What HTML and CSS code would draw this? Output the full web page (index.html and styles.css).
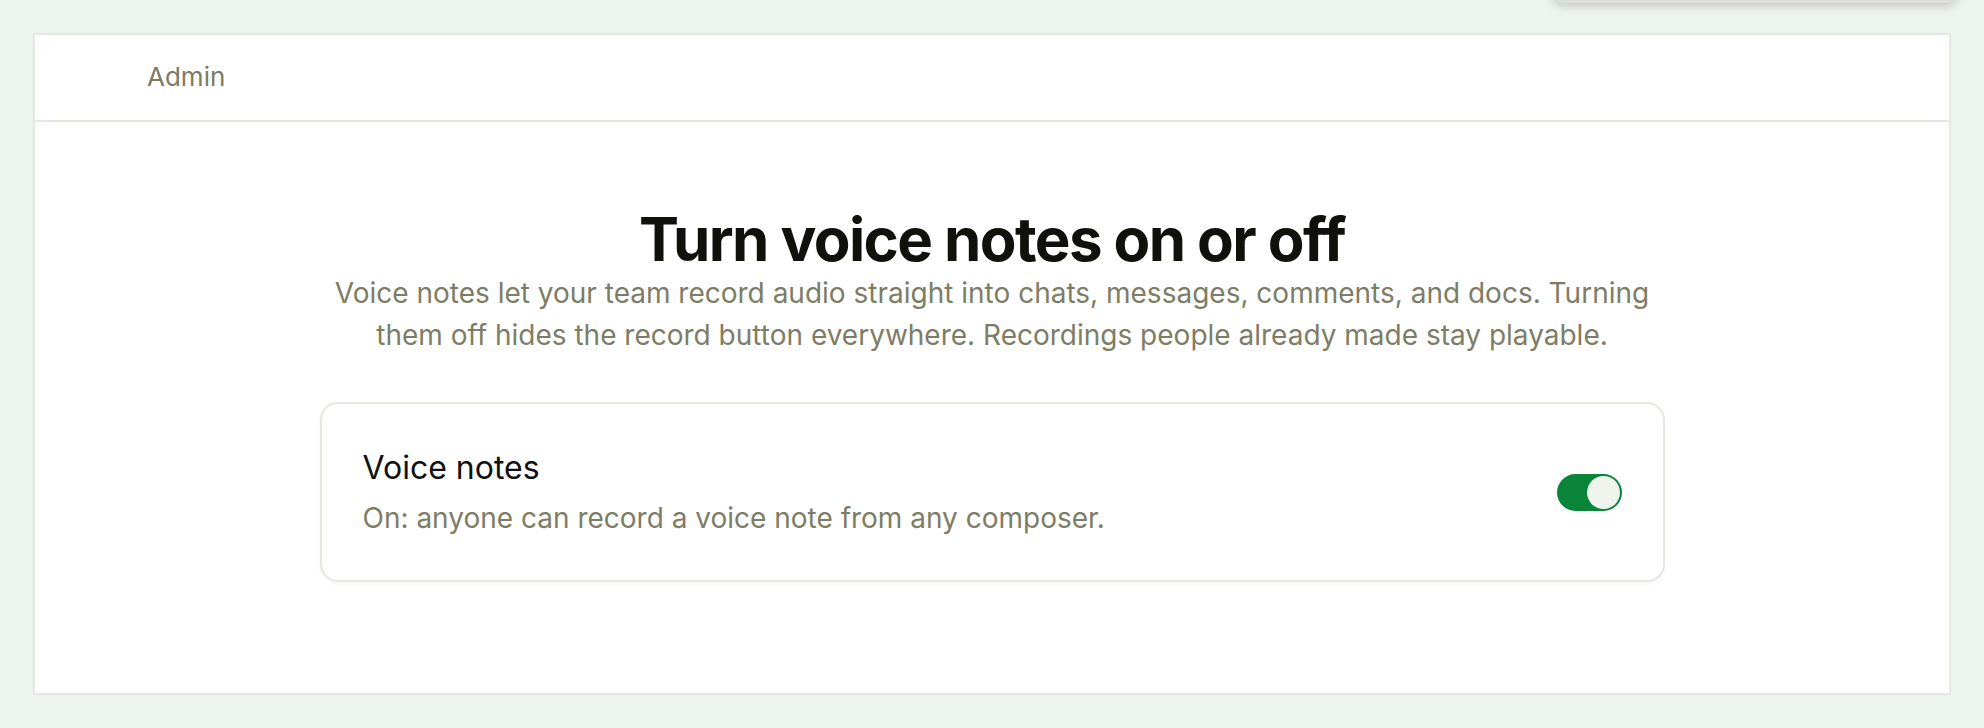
FILE: index.html
```html
<!DOCTYPE html>
<html lang="en">

<head>
  <meta charset="UTF-8">
  <meta name="viewport" content="width=device-width, initial-scale=1.0">
  <title>Voice notes</title>
  <link rel="stylesheet" href="styles.css">
</head>

<body>
  <div class="popover"></div>
  <div class="panel">
    <div class="panel-head">
      <span class="crumb">Admin</span>
    </div>
    <div class="panel-body">
      <h1>Turn voice notes on or off</h1>
      <p class="lead">
        Voice notes let your team record audio straight into chats, messages, comments, and docs. Turning<br>
        them off hides the record button everywhere. Recordings people already made stay playable.
      </p>
      <div class="card">
        <div class="card-text">
          <h3>Voice notes</h3>
          <p>On: anyone can record a voice note from any composer.</p>
        </div>
        <button class="switch on" aria-label="Voice notes"><span class="knob"></span></button>
      </div>
    </div>
  </div>
</body>

</html>
```

FILE: styles.css
```css
* {
  margin: 0;
  padding: 0;
  box-sizing: border-box;
}

html,
body {
  height: 100%;
}

body {
  font-family: Inter, "Noto Sans", sans-serif;
  background-color: #edf4ee;
  padding: 33px 33px 0 33px;
  overflow: hidden;
}

.popover {
  position: fixed;
  top: -60px;
  left: 1552px;
  width: 406px;
  height: 63px;
  border-radius: 12px;
  background-color: #dcdeda;
  box-shadow: 0 3px 10px rgba(60, 70, 60, .25);
}

.panel {
  background-color: #fff;
  border: 2px solid #e5e7e1;
  height: 662px;

  & .panel-head {
    height: 87px;
    border-bottom: 2px solid #e5e7e1;
    display: flex;
    align-items: center;
    padding-left: 112px;
    padding-bottom: 2px;

    & .crumb {
      font-size: 26px;
      color: #7b7b64;
    }
  }
}

.panel-body {
  display: flex;
  flex-direction: column;
  align-items: center;
  padding-top: 87px;

  & h1 {
    font-size: 60px;
    line-height: 1;
    font-weight: 700;
    letter-spacing: -1.6px;
    color: #10110d;
  }

  & .lead {
    margin-top: 3px;
    font-size: 28px;
    line-height: 42px;
    color: #7d7d66;
    text-align: center;
  }
}

.card {
  margin-top: 46px;
  width: 1345px;
  height: 180px;
  border: 2px solid #e6e7e1;
  border-radius: 18px;
  box-shadow: 0 2px 4px rgba(0, 0, 0, .04);
  display: flex;
  align-items: center;
  justify-content: space-between;
  padding: 0 41px 0 41px;

  & h3 {
    font-size: 32px;
    font-weight: 400;
    color: #111;
    line-height: 38px;
  }

  & p {
    margin-top: 14px;
    font-size: 28px;
    line-height: 34px;
    color: #7d7d66;
  }
}

.switch {
  width: 65px;
  height: 37px;
  border: none;
  border-radius: 19px;
  background-color: #0a8438;
  display: flex;
  align-items: center;
  padding: 0 2px;
  justify-content: flex-end;

  & .knob {
    width: 33px;
    height: 33px;
    border-radius: 50%;
    background-color: #eef3ee;
  }
}
```
